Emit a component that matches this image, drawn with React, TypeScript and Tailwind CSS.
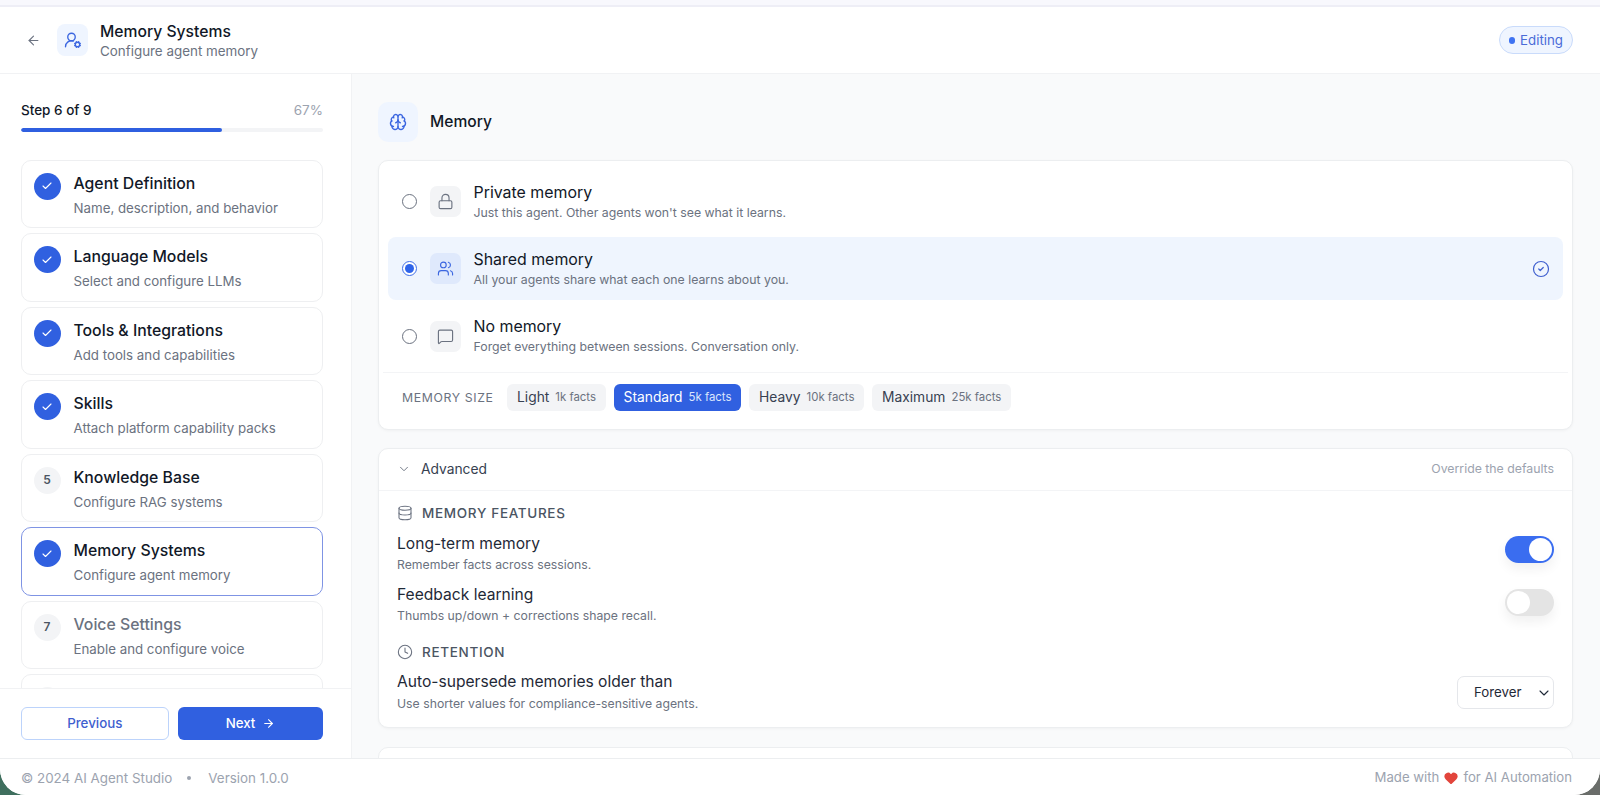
import { ArrowLeft, ArrowRight, Brain, Check, ChevronDown, CircleCheck, Clock, Database, Heart, Lock, MessageSquare, UserRoundCog, Users } from 'lucide-react';

const steps = [
  { title: 'Agent Definition', sub: 'Name, description, and behavior', done: true },
  { title: 'Language Models', sub: 'Select and configure LLMs', done: true },
  { title: 'Tools & Integrations', sub: 'Add tools and capabilities', done: true },
  { title: 'Skills', sub: 'Attach platform capability packs', done: true },
  { title: 'Knowledge Base', sub: 'Configure RAG systems', num: 5 },
  { title: 'Memory Systems', sub: 'Configure agent memory', done: true, active: true },
  { title: 'Voice Settings', sub: 'Enable and configure voice', num: 7, muted: true },
];

const memoryOptions = [
  { title: 'Private memory', sub: "Just this agent. Other agents won't see what it learns.", icon: Lock },
  { title: 'Shared memory', sub: 'All your agents share what each one learns about you.', icon: Users, selected: true },
  { title: 'No memory', sub: 'Forget everything between sessions. Conversation only.', icon: MessageSquare },
];

const sizes = [
  { label: 'Light', facts: '1k facts' },
  { label: 'Standard', facts: '5k facts', selected: true },
  { label: 'Heavy', facts: '10k facts' },
  { label: 'Maximum', facts: '25k facts' },
];

function StepCard({ step }: { step: (typeof steps)[number] }) {
  return (
    <div
      className={`flex h-[68.5px] shrink-0 gap-[13px] rounded-[10px] border bg-white pl-[11.5px] pt-[12px] ${
        step.active ? 'border-[#7f94e4]' : 'border-[#eeeff1]'
      }`}
    >
      {step.done ? (
        <div className="flex h-[27px] w-[27px] shrink-0 items-center justify-center rounded-full bg-[#3060e0] text-white">
          <Check size={12} strokeWidth={2.2} />
        </div>
      ) : (
        <div className="flex h-[27px] w-[27px] shrink-0 items-center justify-center rounded-full bg-[#f3f4f6] text-[12px] font-semibold text-[#4b5563]">
          {step.num}
        </div>
      )}
      <div className="min-w-0">
        <div className={`text-[15.8px] leading-[22px] font-medium ${step.muted ? 'text-[#6b7280]' : 'text-[#111827]'}`}>{step.title}</div>
        <div className="mt-[3px] text-[13.3px] leading-[20px] text-[#6b7280]">{step.sub}</div>
      </div>
    </div>
  );
}

function Toggle({ on, className }: { on?: boolean; className: string }) {
  return (
    <div
      className={`flex h-[27px] w-[49px] items-center rounded-full p-[2px] shadow-[0_6px_12px_rgba(0,0,0,0.06)] ${className} ${
        on ? 'justify-end bg-[#3a6df0]' : 'justify-start bg-[#e4e4e4]'
      }`}
    >
      <div className="h-[23px] w-[23px] rounded-full bg-white" />
    </div>
  );
}

export default function App() {
  return (
    <div className="h-[795px] w-full overflow-hidden bg-[linear-gradient(90deg,#3f6f5e_0%,#4a5a54_50%,#6a6d6a_100%)] font-['Inter',sans-serif]">
      <div className="flex h-full flex-col overflow-hidden rounded-b-[26px] bg-white">
        <div className="h-[7px] shrink-0 border-b-2 border-[#eeeef6] bg-[#f8f8fd]" />

        <header className="flex h-[67px] shrink-0 items-center border-b border-[#f1f2f4] bg-white pl-[26px] pr-[27px]">
          <ArrowLeft size={15} className="text-[#6b7280]" strokeWidth={1.8} />
          <div className="ml-[16px] flex h-[32px] w-[31px] items-center justify-center rounded-[8px] bg-[#eff5ff] text-[#3b66e0]">
            <UserRoundCog size={18} strokeWidth={1.8} />
          </div>
          <div className="ml-[12px] pt-[2px]">
            <div className="text-[15.7px] leading-[20px] font-medium text-[#111827]">Memory Systems</div>
            <div className="text-[13.4px] leading-[19px] text-[#6b7280]">Configure agent memory</div>
          </div>
          <div className="ml-auto flex h-[28px] items-center gap-[5px] rounded-full border border-[#c9dbfb] bg-[#eff5ff] px-[9px] pt-[1px] text-[13.3px] text-[#4a6bd8]">
            <span className="h-[6.5px] w-[6.5px] rounded-full bg-[#3f73f2]" />
            Editing
          </div>
        </header>

        <div className="flex min-h-0 flex-1">
          <aside className="flex w-[352px] shrink-0 flex-col border-r border-[#f1f2f4] bg-white">
            <div className="flex min-h-0 flex-1 flex-col overflow-hidden pl-[21px] pr-[28px] pt-[26px]">
              <div className="flex items-center justify-between text-[13.5px] leading-[20px]">
                <span className="font-medium text-[#111827]">Step 6 of 9</span>
                <span className="text-[#9ca3af]">67%</span>
              </div>
              <div className="mt-[8px] h-[4px] shrink-0 overflow-hidden rounded-full bg-[#f3f4f6]">
                <div className="h-full w-[66.6%] rounded-full bg-[#2f5fe0]" />
              </div>
              <div className="mt-[27.5px] flex flex-col gap-[5px]">
                {steps.map((s) => (
                  <StepCard key={s.title} step={s} />
                ))}
                {/* next step card, only its top edge shows above the buttons */}
                <div className="h-[68.5px] shrink-0 rounded-[10px] border border-[#eeeff1] bg-white pl-[11.5px] pt-[12px]">
                  <div className="h-[27px] w-[27px] rounded-full bg-[#f3f4f6]" />
                </div>
              </div>
            </div>
            <div className="flex h-[70px] shrink-0 gap-[9.5px] border-t border-[#f1f2f4] bg-white pl-[21px] pr-[28px] pt-[18px]">
              <button className="flex h-[33px] w-[147.5px] items-center justify-center rounded-[6px] border border-[#bcd3fb] bg-white text-[13.3px] font-medium text-[#3f5fcf]">
                Previous
              </button>
              <button className="flex h-[33px] flex-1 items-center justify-center gap-[7px] rounded-[6px] bg-[#3060e0] text-[13.3px] font-medium text-white">
                Next
                <ArrowRight size={13} strokeWidth={2} />
              </button>
            </div>
          </aside>

          <main className="min-w-0 flex-1 overflow-hidden bg-[#f9fafb] pl-[26px] pr-[27px] pt-[28px]">
            <div className="flex items-center gap-[12px]">
              <div className="flex h-[40px] w-[40px] items-center justify-center rounded-[10px] bg-[#eff5ff] text-[#3b66e0]">
                <Brain size={18} strokeWidth={1.8} />
              </div>
              <h2 className="text-[15.6px] font-medium text-[#111827]">Memory</h2>
            </div>

            <section className="mt-[18px] rounded-[10px] border border-[#eceef0] bg-white shadow-[0_1px_3px_rgba(0,0,0,0.04)]">
              <div className="flex flex-col gap-[4.3px] pl-[8.5px] pr-[9.5px] pt-[9px]">
                {memoryOptions.map((o) => {
                  const Icon = o.icon;
                  return (
                    <div key={o.title} className={`flex h-[63px] items-center rounded-[8px] pl-[14px] pr-[13px] ${o.selected ? 'bg-[#eff5fe]' : ''}`}>
                      <div
                        className={`flex h-[15px] w-[15px] items-center justify-center rounded-full border ${
                          o.selected ? 'border-[#3f6ee8]' : 'border-[#6b7280]'
                        } bg-white`}
                      >
                        {o.selected && <div className="h-[9px] w-[9px] rounded-full bg-[#2f64ea]" />}
                      </div>
                      <div
                        className={`ml-[13px] flex h-[31px] w-[31px] items-center justify-center rounded-[7px] ${
                          o.selected ? 'bg-[#dfe9fc] text-[#3b66e0]' : 'bg-[#f3f4f6] text-[#6b7280]'
                        }`}
                      >
                        <Icon size={17} strokeWidth={1.6} />
                      </div>
                      <div className="ml-[13px]">
                        <div className="text-[15.9px] leading-[20px] text-[#111827]">{o.title}</div>
                        <div className="mt-[2px] text-[12.3px] leading-[16px] text-[#6b7280]">{o.sub}</div>
                      </div>
                      {o.selected && <CircleCheck size={18} strokeWidth={1.6} className="ml-auto text-[#3f5fcf]" />}
                    </div>
                  );
                })}
              </div>
              <div className="mx-[4px] mt-[4.4px] flex h-[57px] items-start border-t border-[#f3f4f6] pl-[19px] pt-[11px]">
                <span className="mr-[13.5px] mt-[6px] text-[12.3px] leading-[16px] tracking-[0.05em] text-[#6b7280]">MEMORY SIZE</span>
                <div className="flex gap-[7.6px]">
                  {sizes.map((s) => (
                    <div
                      key={s.label}
                      className={`flex h-[27px] items-center gap-[6px] rounded-[6px] px-[10px] text-[13.8px] ${
                        s.selected ? 'bg-[#3060e0] text-white' : 'bg-[#f3f4f6] text-[#374151]'
                      }`}
                    >
                      <span>{s.label}</span>
                      <span className={`text-[11.4px] ${s.selected ? 'text-[#dbe6fd]' : 'text-[#6b7280]'}`}>{s.facts}</span>
                    </div>
                  ))}
                </div>
              </div>
            </section>

            <section className="mt-[18px] rounded-[10px] border border-[#eceef0] bg-white shadow-[0_1px_3px_rgba(0,0,0,0.04)]">
              <div className="flex h-[42px] items-center border-b border-[#f3f4f6] pl-[18px] pr-[18px]">
                <ChevronDown size={14} strokeWidth={1.6} className="text-[#6b7280]" />
                <span className="ml-[10px] text-[13.8px] text-[#374151]">Advanced</span>
                <span className="ml-auto text-[12.3px] text-[#9ca3af]">Override the defaults</span>
              </div>
              <div className="px-[18px] pb-[15px] pt-[13px]">
                <div className="flex items-center gap-[9px] text-[13.5px] leading-[18px] font-medium tracking-[0.05em] text-[#4b5563]">
                  <Database size={16} strokeWidth={1.6} className="text-[#6b7280]" />
                  MEMORY FEATURES
                </div>
                <div className="mt-[12px] flex items-start justify-between">
                  <div>
                    <div className="text-[15.6px] leading-[20px] text-[#1f2937]">Long-term memory</div>
                    <div className="mt-[3px] text-[12.25px] leading-[16px] text-[#6b7280]">Remember facts across sessions.</div>
                  </div>
                  <Toggle on className="mt-[2.5px]" />
                </div>
                <div className="mt-[12px] flex items-start justify-between">
                  <div>
                    <div className="text-[15.6px] leading-[20px] text-[#1f2937]">Feedback learning</div>
                    <div className="mt-[3px] text-[12.25px] leading-[16px] text-[#6b7280]">Thumbs up/down + corrections shape recall.</div>
                  </div>
                  <Toggle className="mt-[4.5px]" />
                </div>
                <div className="mt-[19px] flex items-center gap-[9px] text-[13.5px] leading-[18px] font-medium tracking-[0.05em] text-[#4b5563]">
                  <Clock size={16} strokeWidth={1.6} className="text-[#6b7280]" />
                  RETENTION
                </div>
                <div className="mt-[11px] flex items-start justify-between">
                  <div>
                    <div className="text-[15.6px] leading-[20px] text-[#1f2937]">Auto-supersede memories older than</div>
                    <div className="mt-[4px] text-[12.25px] leading-[16px] text-[#6b7280]">Use shorter values for compliance-sensitive agents.</div>
                  </div>
                  <div className="mt-[4.5px] flex h-[33px] w-[97px] items-center rounded-[7px] border border-[#e5e7eb] bg-white pl-[16px] pr-[1px] text-[13.3px] text-[#1f2937]">
                    Forever
                    <ChevronDown size={16} strokeWidth={1.6} className="ml-auto" />
                  </div>
                </div>
              </div>
            </section>

            <section className="mt-[19px] h-[60px] rounded-[10px] border border-[#eceef0] bg-white" />
          </main>
        </div>

        <footer className="flex h-[37px] shrink-0 items-center border-t border-[#eceef0] bg-white pl-[21px] pr-[28px] pt-[2px] text-[13.4px] text-[#9ca3af]">
          <span>© 2024 AI Agent Studio</span>
          <span className="ml-[15px] mr-[17px] h-[4px] w-[4px] rounded-full bg-[#9ca3af]" />
          <span>Version 1.0.0</span>
          <span className="ml-auto flex items-center gap-[4px] text-[13.2px]">
            Made with
            <Heart size={16} fill="#e2453c" strokeWidth={0} />
            for AI Automation
          </span>
        </footer>
      </div>
    </div>
  );
}
